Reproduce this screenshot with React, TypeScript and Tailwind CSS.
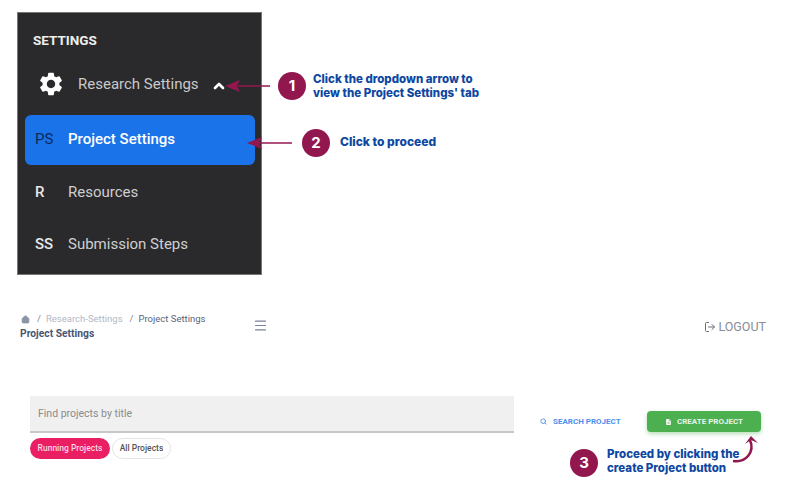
import { ChevronUp, Home, LogOut, Menu, Search } from "lucide-react";

function Step({ n }: { n: number }) {
  return (
    <div className="flex h-[28px] w-[28px] shrink-0 items-center justify-center rounded-full bg-[#93174f] font-['Inter',sans-serif] text-[15px] font-bold text-white">
      {n}
    </div>
  );
}

function SubItem({ short, label, active }: { short: string; label: string; active?: boolean }) {
  return (
    <div
      className={
        active
          ? "mb-[1px] ml-[7px] flex h-[50px] w-[230px] items-center rounded-[6px] bg-[#1a73e8] pb-[2px] pl-[10px]"
          : "ml-[7px] flex h-[52px] w-[230px] items-center pl-[10px]"
      }
    >
      <span className={active ? "w-[33px] text-[15px] text-[#0b2a5c]" : "w-[33px] text-[15px] font-medium text-[#e8e8e8]"}>
        {short}
      </span>
      <span className={active ? "text-[15px] font-medium text-white" : "text-[15px] text-[#cfcfcf]"}>{label}</span>
    </div>
  );
}

export default function App() {
  return (
    <div className="relative h-[483px] w-[807px] overflow-hidden bg-white font-['Roboto',sans-serif]">
      {/* sidebar screenshot */}
      <div className="ml-[17px] mt-[12px] h-[263px] w-[245px] border border-[#777] bg-[#2a2a2d]">
        <div className="pl-[15px] pt-[19px] text-[13.5px] font-bold leading-[16px] text-[#eee]">SETTINGS</div>
        <div className="mt-[21px] flex h-[30px] items-center pl-[19px]">
          <svg width="28" height="28" viewBox="0 0 24 24" className="fill-white">
            <path d="M19.14 12.94c.04-.3.06-.61.06-.94 0-.32-.02-.64-.07-.94l2.03-1.58a.49.49 0 0 0 .12-.61l-1.92-3.32a.488.488 0 0 0-.59-.22l-2.39.96c-.5-.38-1.03-.7-1.62-.94l-.36-2.54a.484.484 0 0 0-.48-.41h-3.84c-.24 0-.43.17-.47.41l-.36 2.54c-.59.24-1.13.57-1.62.94l-2.39-.96c-.22-.08-.47 0-.59.22L2.74 8.87c-.12.21-.08.47.12.61l2.03 1.58c-.05.3-.09.63-.09.94s.02.64.07.94l-2.03 1.58a.49.49 0 0 0-.12.61l1.92 3.32c.12.22.37.29.59.22l2.39-.96c.5.38 1.03.7 1.62.94l.36 2.54c.05.24.24.41.48.41h3.84c.24 0 .44-.17.47-.41l.36-2.54c.59-.24 1.13-.56 1.62-.94l2.39.96c.22.08.47 0 .59-.22l1.92-3.32c.12-.22.07-.47-.12-.61l-2.01-1.58zM12 15.6c-1.98 0-3.6-1.62-3.6-3.6s1.62-3.6 3.6-3.6 3.6 1.62 3.6 3.6-1.62 3.6-3.6 3.6z" />
          </svg>
          <span className="ml-[13px] text-[15px] text-[#c9c9c9]">Research Settings</span>
          <ChevronUp size={16} strokeWidth={4} className="ml-[12px] mt-[4px] text-white" />
        </div>
        <div className="mt-[16px]">
          <SubItem short="PS" label="Project Settings" active />
          <SubItem short="R" label="Resources" />
          <SubItem short="SS" label="Submission Steps" />
        </div>
      </div>

      {/* page header */}
      <div className="mt-[36px] flex items-start pl-[20px] pr-[41px]">
        <div className="w-[233px]">
          <div className="flex h-[16px] items-center text-[9.5px] text-[#b4b8c6]">
            <Home size={9} className="ml-[1px] fill-[#8a93a8] text-[#8a93a8]" />
            <span className="ml-[7px] text-[#7b809a]">/</span>
            <span className="ml-[5px]">Research-Settings</span>
            <span className="ml-[7px] text-[#7b809a]">/</span>
            <span className="ml-[5px] text-[#5b6478]">Project Settings</span>
          </div>
          <div className="text-[10.3px] font-bold leading-[14px] text-[#4a5672]">Project Settings</div>
        </div>
        <Menu size={15} strokeWidth={1.8} className="mt-[7px] text-[#7b809a]" />
        <div className="ml-auto mt-[7px] flex items-center text-[12.5px] text-[#8a8d96]">
          <LogOut size={12} className="mr-[2px] text-[#6b6e78]" />
          LOGOUT
        </div>
      </div>

      {/* search row */}
      <div className="mt-[55px] flex pl-[30px]">
        <div>
          <div className="flex h-[37px] w-[484px] items-center border-b-2 border-[#c8c8c8] bg-[#f0f0f0] pl-[8px] text-[10.5px] text-[#8b8b8b]">
            Find projects by title
          </div>
          <div className="mt-[5px] flex gap-[2px]">
            <div className="flex h-[21px] w-[80px] items-center justify-center rounded-full bg-[#e91e63] text-[8.5px] font-medium text-[#fbd5e2]">
              Running Projects
            </div>
            <div className="flex h-[21px] w-[59px] items-center justify-center rounded-full border border-[#e4e4e4] text-[8.5px] font-medium text-[#555]">
              All Projects
            </div>
          </div>
        </div>
        <div className="ml-[26px] mt-[15px] flex h-[21px] w-[81px] items-center text-[8px] font-bold text-[#4a90f0]">
          <Search size={7} strokeWidth={3} className="mr-[6px]" />
          SEARCH PROJECT
        </div>
        <div className="ml-[26px] mt-[15px] flex h-[21px] w-[114px] items-center justify-center rounded-[4px] bg-[#4caf50] text-[8px] font-bold text-[#e8f5e9] shadow-[0_2px_4px_rgba(76,175,80,0.4)]">
          <svg width="7" height="8" viewBox="0 0 24 24" className="mr-[5px] fill-white">
            <path d="M14 2H6a2 2 0 0 0-2 2v16a2 2 0 0 0 2 2h12a2 2 0 0 0 2-2V8zm2 16H8v-2h8zm0-4H8v-2h8zm-3-5V3.5L18.5 9z" />
          </svg>
          CREATE PROJECT
        </div>
      </div>

      {/* annotations laid over the screenshots */}
      <svg className="absolute left-0 top-0" width="807" height="483" fill="none">
        <path d="M238 86H270" stroke="#93174f" strokeWidth="1.5" />
        <path d="M225 86L240 80L237 86L240 92Z" fill="#93174f" />
        <path d="M258 143H292" stroke="#93174f" strokeWidth="1.5" />
        <path d="M247 143L262 137L259 143L262 149Z" fill="#93174f" />
        <path d="M733 461C746 463 755 452 750 440" stroke="#93174f" strokeWidth="2.5" />
        <path d="M751 436L758 443L751 440L745 444Z" fill="#93174f" />
      </svg>

      <div className="absolute left-[278px] top-[72px] flex items-center gap-[7px] font-['Inter',sans-serif] text-[11.5px] font-extrabold leading-[14px] text-[#0d47a1]">
        <Step n={1} />
        <div className="-mt-[1px]">
          Click the dropdown arrow to
          <br />
          view the Project Settings' tab
        </div>
      </div>
      <div className="absolute left-[302px] top-[129px] flex items-center gap-[10px] font-['Inter',sans-serif] text-[12px] font-extrabold text-[#0d47a1]">
        <Step n={2} />
        <div className="-mt-[2px]">Click to proceed</div>
      </div>
      <div className="absolute left-[570px] top-[449px] flex items-center gap-[9px] font-['Inter',sans-serif] text-[11.5px] font-extrabold leading-[14px] text-[#0d47a1]">
        <Step n={3} />
        <div className="-mt-[4px]">
          Proceed by clicking the
          <br />
          create Project button
        </div>
      </div>
    </div>
  );
}
